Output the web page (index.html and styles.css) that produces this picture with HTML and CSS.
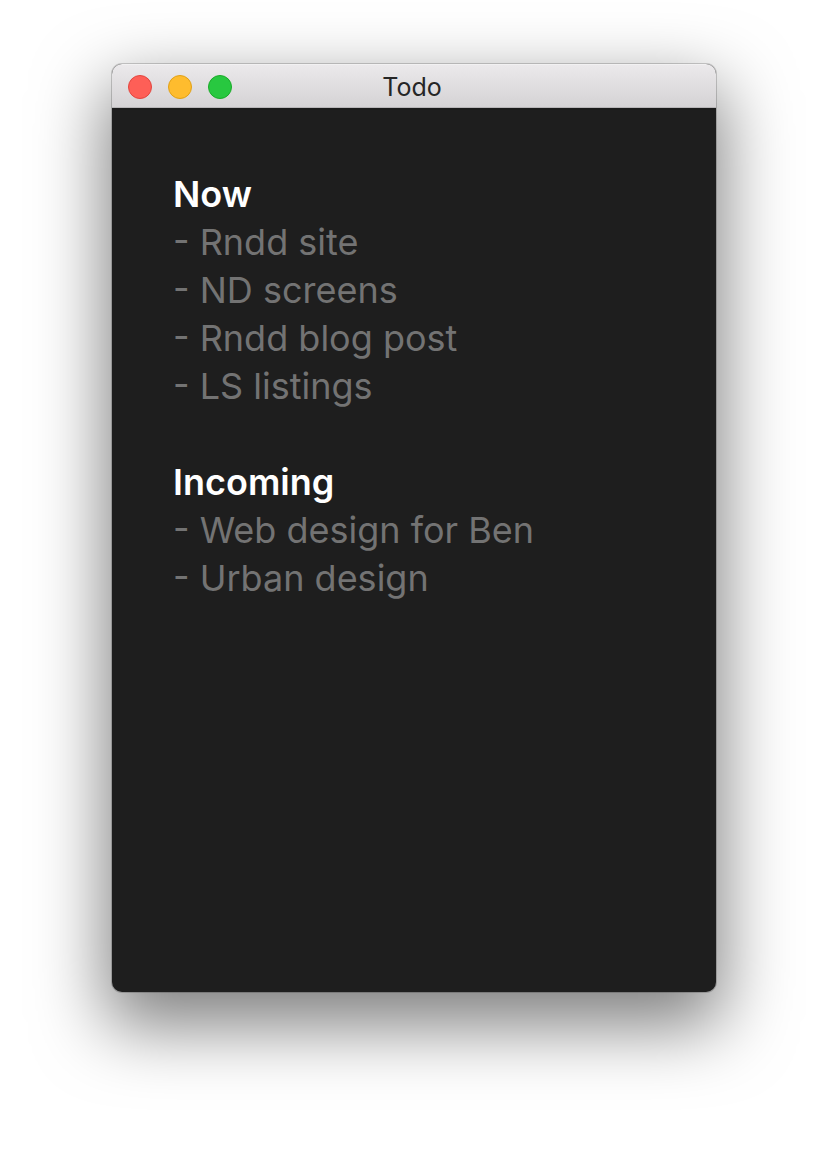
FILE: index.html
```html
<!DOCTYPE html>
<html>
<head>
<meta charset="utf-8">
<link rel="stylesheet" href="styles.css">
</head>
<body>
<div class="window">
  <div class="titlebar">
    <div class="lights">
      <span class="light red"></span>
      <span class="light yellow"></span>
      <span class="light green"></span>
    </div>
    <div class="title">Todo</div>
  </div>
  <div class="content">
    <div class="heading">Now</div>
    <div class="item">- Rndd site</div>
    <div class="item">- ND screens</div>
    <div class="item">- Rndd blog post</div>
    <div class="item">- LS listings</div>
    <div class="blank"></div>
    <div class="heading">Incoming</div>
    <div class="item">- Web design for Ben</div>
    <div class="item">- Urban design</div>
  </div>
</div>
</body>
</html>
```
FILE: styles.css
```css
html, body {
  margin: 0;
  padding: 0;
  background: #ffffff;
}
body {
  width: 828px;
  height: 1152px;
  padding: 64px 0 0 112px;
  box-sizing: border-box;
  overflow: hidden;
}
.window {
  width: 604px;
  height: 928px;
  border-radius: 10px;
  background: #1e1e1e;
  box-shadow: 0 0 0 1px rgba(0,0,0,0.18), 0 28px 70px 6px rgba(0,0,0,0.5);
  display: flex;
  flex-direction: column;
  overflow: hidden;
}
.titlebar {
  position: relative;
  height: 43px;
  flex: none;
  background: linear-gradient(#ebe9eb, #d4d2d4);
  border-top: 1px solid #f2f1f2;
  border-bottom: 2px solid #1a1a1a;
  box-shadow: inset 0 -1px 0 #b7b5b7;
  display: flex;
  align-items: center;
  justify-content: center;
}
.lights {
  position: absolute;
  left: 16px;
  top: 10px;
  display: flex;
  gap: 16px;
}
.light {
  width: 24px;
  height: 24px;
  border-radius: 50%;
  box-sizing: border-box;
}
.red { background: #fe5f57; border: 1px solid #e2463f; }
.yellow { background: #febc2e; border: 1px solid #e1a116; }
.green { background: #28c840; border: 1px solid #1aab29; }
.title {
  font-family: Inter, "Noto Sans", sans-serif;
  font-size: 25px;
  color: #262626;
  margin: 1px 4px 0 0;
}
.content {
  flex: 1;
  padding: 60px 0 0 61px;
  font-family: Inter, "Noto Sans", sans-serif;
  font-size: 36px;
  line-height: 48px;
}
.heading {
  color: #ffffff;
  font-weight: 600;
}
.item {
  color: #737373;
}
.blank {
  height: 48px;
}
```
